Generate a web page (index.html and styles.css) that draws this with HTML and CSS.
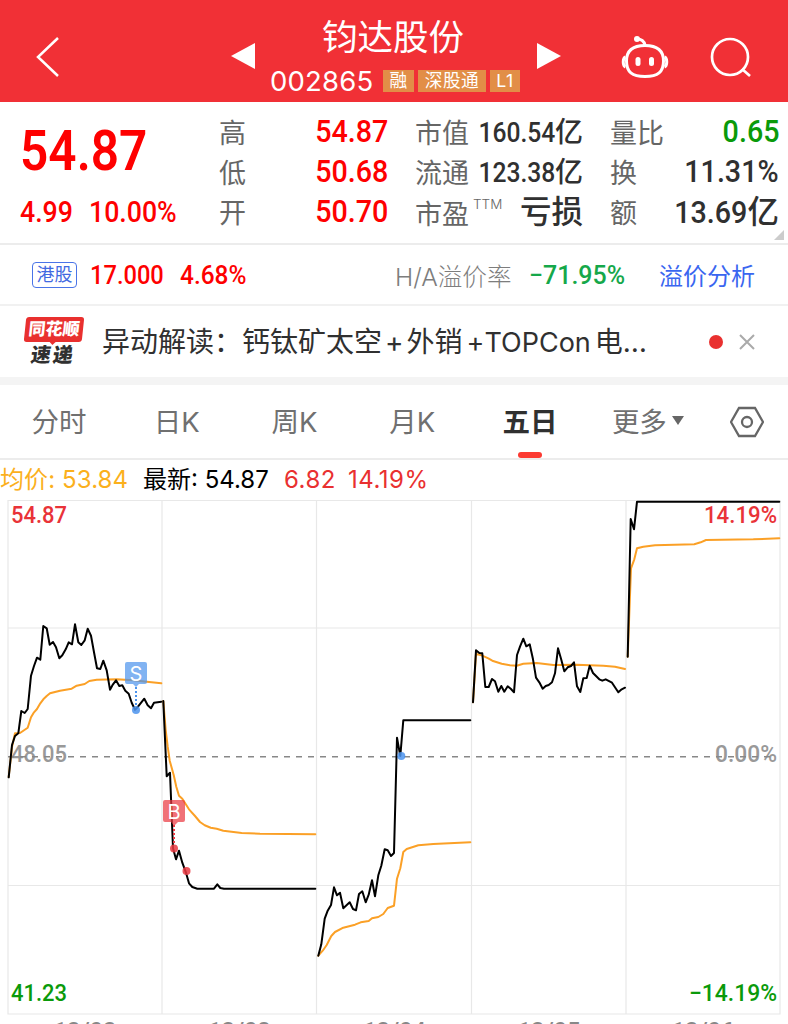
FILE: index.html
```html
<!DOCTYPE html>
<html lang="zh-CN">
<head>
  <meta charset="UTF-8" />
  <meta name="viewport" content="width=device-width, initial-scale=1.0"/>
  <title>钧达股份 002865</title>
  <link rel="stylesheet" href="styles.css">
</head>
<body>
  <header class="topbar">
    <svg class="back" width="24" height="42" viewBox="0 0 24 42"><path d="M22 2 L2 21 L22 40"/></svg>
    <svg class="arrow" width="24" height="26" viewBox="0 0 24 26"><path d="M0 13 L24 0 V26 Z"/></svg>
    <div class="stock">
      <h1>钧达股份</h1>
      <div class="code-row">
        <span class="code">002865</span>
        <span class="tag">融</span><span class="tag">深股通</span><span class="tag">L1</span>
      </div>
    </div>
    <svg class="arrow next" width="24" height="26" viewBox="0 0 24 26"><path d="M24 13 L0 0 V26 Z"/></svg>
    <svg class="robot" width="48" height="44" viewBox="0 0 48 44">
      <path class="line" d="M24 10.500 C37 10.500 42.500 16 42.500 26 C42.500 37 37 41.500 24 41.500 C11 41.500 5.500 37 5.500 26 C5.500 16 11 10.500 24 10.500 Z"/>
      <path class="line" d="M24 10 C23 6 21 4 16 4"/>
      <path class="line ear" d="M4.500 22 C1.500 23 1.500 31 4.500 32 M43.500 22 C46.500 23 46.500 31 43.500 32"/>
      <circle cx="16" cy="4" r="3"/>
      <rect x="14.500" y="22" width="5" height="9" rx="2.500"/>
      <rect x="28" y="22" width="5" height="9" rx="2.500"/>
    </svg>
    <svg class="search" width="42" height="42" viewBox="0 0 42 42"><circle cx="20" cy="20" r="18"/><path d="M32 32 L40 39"/></svg>
  </header>

  <section class="quote">
    <div class="price">
      <div class="last"><span class="num">54.87</span></div>
      <div class="change"><span class="num">4.99</span><span class="num">10.00%</span></div>
    </div>
    <div class="cell"><span>高</span><b class="num up">54.87</b></div>
    <div class="cell"><span>市值</span><b class="small"><i class="num">160.54</i>亿</b></div>
    <div class="cell"><span>量比</span><b class="num down">0.65</b></div>
    <div class="cell"><span>低</span><b class="num up">50.68</b></div>
    <div class="cell"><span>流通</span><b class="small"><i class="num">123.38</i>亿</b></div>
    <div class="cell"><span>换</span><b class="num">11.31%</b></div>
    <div class="cell"><span>开</span><b class="num up">50.70</b></div>
    <div class="cell"><span class="pe">市盈<sup>TTM</sup></span><b class="loss">亏损</b></div>
    <div class="cell"><span>额</span><b><i class="num">13.69</i>亿</b></div>
    <div class="corner"></div>
  </section>

  <section class="hk">
    <span class="hk-tag">港股</span>
    <span class="num hk-price">17.000</span>
    <span class="num hk-pct">4.68%</span>
    <span class="ratio-label">H/A溢价率</span>
    <span class="num ratio">−71.95%</span>
    <a class="analysis">溢价分析</a>
  </section>

  <section class="news">
    <div class="logo">
      <div class="logo-top">同花顺</div>
      <div class="logo-bottom">速递</div>
    </div>
    <p class="headline">异动解读：钙钛矿太空<span class="plus">+</span>外销<span class="topcon">+TOPCon</span>电<span class="dots">…</span></p>
    <span class="dot"></span>
    <svg class="close" width="16" height="16" viewBox="0 0 16 16"><path d="M1 1 L15 15 M15 1 L1 15"/></svg>
  </section>

  <nav class="tabs">
    <a>分时</a>
    <a>日K</a>
    <a>周K</a>
    <a>月K</a>
    <a class="active">五日</a>
    <a class="more">更多<i></i></a>
    <svg width="34" height="32" viewBox="0 0 34 32"><path d="M9 2 H25 L33 16 L25 30 H9 L1 16 Z"/><circle cx="17" cy="16" r="5"/></svg>
  </nav>

  <div class="legend">
    <span class="avg">均价: 53.84</span>
    <span class="now">最新: 54.87</span>
    <span class="rise">6.82</span>
    <span class="rise">14.19%</span>
  </div>

  <svg class="chart" width="788" height="525" viewBox="0 499 788 525">
    <!-- grid -->
    <path class="grid" d="M8 500.500 H780 V1014 H8 Z M162 500 V1014 M316.500 500 V1014 M471.500 500 V1014 M626 500 V1014 M8 628 H780 M8 885.500 H780"/>

    <!-- scale -->
    <g class="scale">
      <text class="s-red" x="11" y="523" textLength="56" lengthAdjust="spacingAndGlyphs">54.87</text>
      <text class="s-red" x="704" y="523" textLength="73" lengthAdjust="spacingAndGlyphs">14.19%</text>
      <text class="s-gray" x="11" y="762" textLength="56" lengthAdjust="spacingAndGlyphs">48.05</text>
      <text class="s-gray" x="715" y="762" textLength="62" lengthAdjust="spacingAndGlyphs">0.00%</text>
      <text class="s-green" x="11" y="1000.500" textLength="56" lengthAdjust="spacingAndGlyphs">41.23</text>
      <text class="s-green" x="689" y="1000.500" textLength="88" lengthAdjust="spacingAndGlyphs">−14.19%</text>
    </g>
    <path class="zero" d="M8 756.700 H776"/>

    <!-- average price -->
    <g class="avg-line">
      <polyline points="8.700,777 12,747 15,733.300 20,733 27.700,727.700 31,717.300 34,712.300 37,709 40.300,703.300 43.300,699.300 46.700,696 50,693.300 60,690.700 71.700,688.700 76.700,685.700 84.700,684 89.300,681 96.700,679.700 116.700,679.300 133.300,680.300 146.700,681.700 161.300,683.300"/>
      <polyline points="163.300,701 165.700,730 167.700,746.700 169.700,760.700 173.700,775 176.300,786.700 179,795.700 182.300,798.700 189,809.300 195,816 200,822 204.700,825.300 210.700,827.700 216.700,828.700 223.300,830.700 241.700,833 260,833.700 315.300,834.300"/>
      <polyline points="318.300,955.700 322.700,950.700 326.700,945 331.300,936 335,932 343.300,927.700 355,924.700 360.700,922.300 368.700,921 372,918.300 378.300,917 383.300,914 387.700,908 394,905.700 397,878.700 400.300,868.300 403.300,852 406.700,849 418.300,845.300 433.300,844 470.300,842.300"/>
      <polyline points="473,702.300 476,654 481.700,655.300 488.300,658.300 492.300,660.700 501.700,663.700 510,665.300 516.700,665.700 523.300,663.700 536.700,663 553.300,665 576.700,664.700 603.300,665.700 615,666.700 625,669"/>
      <polyline points="627.700,656.700 631,568.300 634.300,559.300 637,548.300 643.300,546.700 655,545.300 694.300,544.300 700.700,542.300 706,540 753.300,539.300 779.300,538.300"/>
    </g>

    <!-- price -->
    <g class="price-line">
      <polyline points="8.700,777.300 12,745 15,736 18.300,733.300 21.300,711 24.700,713 27.700,709 31,675.700 34,666 37,657.700 40.300,659.700 43.300,626 46.700,628.300 49.700,644.700 53,642 56,647.300 59.300,658.300 62.300,655.300 65.700,649.300 68.700,642.300 72,644.300 75,624.300 78.300,642.300 81.300,645 84.700,640.300 87.700,628.700 91,635.700 94,652.300 97,668.300 100.300,669 103.300,660.700 106.700,670.300 110,689.700 113,684.300 116,680.300 119.300,686 122.300,685.300 125.300,690.700 128.700,693.700 131.700,702.700 135,709.700 138,706.700 144.300,698.700 147.700,705.300 151,708.300 154,702.700 161.300,701.700"/>
      <polyline points="163.300,701 166.700,776.300 170,772.700 173,848.300 176,859.300 179,850.700 182.300,862.700 186,872.700 189,883.300 192.300,887 197.300,888.700 214,888.700 217.300,884.300 220.300,888 224,888.700 315.300,888.700"/>
      <polyline points="318.300,955.700 321.300,944.300 324.700,918.700 327.700,910.700 331,905 334,887.300 337,895.300 340,892.700 343.300,908.300 349.700,902.300 353,909 356,910.300 359,894 362.300,891.300 365.700,902.300 368.700,894.700 372,880.300 375,896.300 378.300,875.300 381.300,865.700 384.700,849.300 387.700,850.300 391,856 394,853 397,737.700 400.300,756 403.300,720.300 470.300,720.300"/>
      <polyline points="473,702.300 476,650.300 479.300,653 482.300,653.300 485.300,687 488.700,687 492,679 495,681.300 498.300,691.700 501.300,686 504.300,691.700 507.700,686.300 511,689 514,692.300 517,655 520,646.700 523.300,638.700 526.300,646.300 529.700,644.300 533,659.300 536,677.700 539.300,682.300 542.700,688.700 545.700,686 548.700,685 552,682.300 555,673.300 558,648.300 561.300,659.700 564.300,671.300 567.700,667.300 571,666 574,662.300 577,686.300 580.300,692 583.300,678.300 586.700,678 589.700,665.700 593,673 599.300,679.300 602.300,680.700 605.700,679.300 612,682.700 618.300,692.300 621.700,689.300 625,687.700"/>
      <polyline points="627.700,656.700 630.700,519 634,529.300 637,501.700 779.300,501.700"/>
    </g>

    <!-- trades -->
    <g class="sell">
      <path d="M127 662 H145 Q147 662 147 664 V682 Q147 684 145 684 H139 L136 687 L133 684 H127 Q125 684 125 682 V664 Q125 662 127 662 Z"/>
      <path class="stem" d="M136 687 V706"/>
      <circle cx="136" cy="710" r="4"/>
      <circle cx="401.300" cy="756" r="4"/>
      <text x="136" y="681">S</text>
    </g>
    <g class="buy">
      <path d="M165 800 H183 Q185 800 185 802 V820 Q185 822 183 822 H178 L174 826 L171 822 H165 Q163 822 163 820 V802 Q163 800 165 800 Z"/>
      <path class="stem" d="M174 825 V844"/>
      <circle cx="174" cy="848.500" r="4"/>
      <circle cx="186.500" cy="871" r="4"/>
      <text x="174" y="818.500">B</text>
    </g>

    <g class="dates">
      <text x="85" y="1039">12/02</text>
      <text x="239.500" y="1039">12/03</text>
      <text x="394.500" y="1039">12/04</text>
      <text x="549" y="1039">12/05</text>
      <text x="703" y="1039">12/06</text>
    </g>
  </svg>
</body>
</html>
```
FILE: styles.css
```css
* {
  box-sizing: border-box;
}
body {
  margin: 0;
  width: 788px;
  height: 1024px;
  overflow: hidden;
  background: #fff;
  color: #303030;
  font-family: Inter, "Noto Sans CJK SC", sans-serif;
}
svg {
  display: block;
  flex: none;
}
i {
  font-style: normal;
}
.num {
  display: inline-block;
  font-family: Roboto, sans-serif;
  font-weight: 500;
  transform: scaleX(0.91);
  transform-origin: right center;
  white-space: nowrap;
}
.up {
  color: #fe0000;
}
.down {
  color: #0a9a0a;
}

/* top bar */
.topbar {
  display: flex;
  height: 102px;
  background: #f13036;
  color: #fff;
}
.back {
  margin: 36px 0 0 36px;
  fill: none;
  stroke: #fff;
  stroke-width: 2.5;
}
.arrow {
  margin: 43px 0 0 171px;
  fill: #fff;
}
.stock {
  width: 267px;
  margin-left: 15px;
}
.stock h1 {
  margin: 17px 0 0;
  padding-left: 52px;
  font-size: 35.5px;
  line-height: 42px;
  font-weight: 400;
}
.code-row {
  display: flex;
  align-items: center;
  height: 44px;
}
.code {
  width: 113px;
  font-size: 27.5px;
  letter-spacing: 0.2px;
}
.tag {
  height: 22px;
  line-height: 22px;
  margin-right: 4px;
  padding: 0 6.5px;
  background: #e28e47;
  font-size: 17.7px;
  letter-spacing: 0.5px;
}
.arrow.next {
  margin-left: 0;
}
.robot {
  margin: 35px 0 0 60px;
  fill: #fff;
}
.robot .line {
  fill: none;
  stroke: #fff;
  stroke-width: 3;
}
.search {
  margin: 37px 0 0 41px;
  fill: none;
  stroke: #fff;
  stroke-width: 2.7;
}

/* quote */
.quote {
  position: relative;
  display: grid;
  grid-template-columns: 169px 168px 169px;
  grid-template-rows: repeat(3, 40px);
  column-gap: 27px;
  height: 143px;
  padding: 10px 9px 0 219px;
  border-bottom: 2px solid #ececec;
}
.price {
  position: absolute;
  left: 20px;
  top: 16px;
  color: #fe0000;
}
.price .num {
  transform-origin: left center;
}
.last {
  height: 64px;
  line-height: 64px;
  font-size: 56px;
}
.last .num {
  font-weight: 600;
  transform: scaleX(0.885);
}
.change {
  display: flex;
  height: 60px;
  line-height: 60px;
  font-size: 30px;
}
.change .num {
  width: 69px;
  transform: scaleX(0.89);
}
.cell {
  display: flex;
  justify-content: space-between;
  align-items: center;
  line-height: 40px;
  font-size: 27px;
  color: #666;
  white-space: nowrap;
}
.cell span {
  padding-top: 4px;
  line-height: 36px;
}
.cell b {
  font-size: 31.5px;
  font-weight: 500;
  color: #303030;
}
.cell b.up {
  color: #fe0000;
}
.cell b.down {
  color: #0a9a0a;
}
.cell b.small {
  margin-left: -20px;
  font-size: 28px;
}
.cell .small .num {
  transform: scaleX(0.88);
}
.cell .pe {
  padding-top: 6px;
  line-height: 34px;
}
.pe sup {
  font-size: 13.5px;
  font-weight: 300;
  line-height: 1;
  vertical-align: 15px;
  margin-left: 4px;
}
.loss {
  margin-left: -20px;
}
.corner {
  position: absolute;
  right: 4px;
  bottom: 3px;
  border-left: 10px solid transparent;
  border-bottom: 10px solid #ccc;
}

/* hk */
.hk {
  display: flex;
  align-items: center;
  height: 61px;
  padding: 0 32px;
  border-bottom: 2px solid #f1f1f1;
  font-size: 24px;
  white-space: nowrap;
}
.hk .num {
  font-size: 26px;
  color: #fe0000;
  transform-origin: left center;
}
.hk-tag {
  width: 45px;
  height: 26px;
  line-height: 24px;
  border: 1px solid #4a74e8;
  border-radius: 4px;
  color: #4169e1;
  font-size: 18px;
  text-align: center;
}
.hk-price {
  width: 90px;
  margin-left: 13px;
}
.hk .hk-pct {
  width: 215px;
  transform: scaleX(0.94);
}
.ratio-label {
  width: 134px;
  color: #7d7d7d;
  font-weight: 300;
  font-size: 24.6px;
}
.hk .ratio {
  width: 130px;
  color: #15a84a;
  transform: scaleX(0.96);
}
.analysis {
  color: #3a66f0;
}

/* news */
.news {
  display: flex;
  align-items: center;
  height: 71px;
}
.logo {
  position: relative;
  width: 60px;
  margin-left: 25px;
  font-weight: 900;
  font-size: 17px;
  text-align: center;
}
.logo-top {
  width: 58px;
  height: 25px;
  line-height: 24px;
  border-radius: 3px;
  background: #e9302f;
  color: #fff;
  transform: skewX(-6deg);
}
.logo-top::after {
  content: "";
  position: absolute;
  left: 25px;
  top: 24px;
  border: 4px solid transparent;
  border-top-color: #e9302f;
  border-bottom: 0;
}
.logo-bottom {
  height: 24px;
  line-height: 26px;
  font-size: 20px;
  letter-spacing: 2px;
  padding-right: 4px;
  transform: skewX(-8deg);
}
.headline {
  width: 608px;
  margin: -4px 0 0 17px;
  font-size: 28px;
  white-space: nowrap;
}
.plus {
  margin: 0 3px;
}
.topcon {
  margin: 0 4px;
  font-size: 27px;
}
.dot {
  width: 14px;
  height: 14px;
  margin-left: -1px;
  border-radius: 50%;
  background: #e9302f;
}
.close {
  margin-left: 16px;
  fill: none;
  stroke: #aaa;
  stroke-width: 2;
}

/* tabs */
.tabs {
  display: grid;
  grid-template-columns: repeat(6, 117.8px) 80px;
  align-items: center;
  justify-items: center;
  height: 83px;
  border-top: 8px solid #f4f4f4;
  border-bottom: 2px solid #ececec;
  font-size: 27.5px;
  color: #707070;
}
.tabs a {
  display: flex;
  align-items: center;
  height: 73px;
  padding-bottom: 3px;
}
.tabs .active {
  position: relative;
  color: #303030;
  font-weight: 700;
}
.active::after {
  content: "";
  position: absolute;
  left: 50%;
  bottom: 0;
  width: 24px;
  height: 6px;
  margin-left: -12px;
  border-radius: 3px;
  background: #fc3a32;
}
.more i {
  margin-left: 5px;
  border: 6px solid transparent;
  border-top: 9px solid #666;
  border-bottom: 0;
}
.tabs svg {
  fill: none;
  stroke: #666;
  stroke-width: 2.3;
}

/* chart */
.legend {
  display: flex;
  height: 39px;
  line-height: 39px;
  font-size: 24px;
  white-space: nowrap;
}
.avg {
  width: 143px;
  color: #fbb01c;
  letter-spacing: 0.1px;
}
.now {
  width: 141px;
  color: #000;
}
.rise {
  width: 64px;
  color: #e93030;
  letter-spacing: 0.5px;
}
.grid {
  fill: none;
  stroke: #e8e8e8;
  stroke-width: 1.2;
}
.zero {
  stroke: #888;
  stroke-width: 1.4;
  stroke-dasharray: 6 6;
}
.scale text {
  font: 500 24px Roboto, sans-serif;
}
.s-red {
  fill: #e93338;
}
.s-gray {
  fill: #999;
}
.s-green {
  fill: #0a9a0a;
}
.avg-line,
.price-line {
  fill: none;
  stroke-width: 2;
  stroke-linejoin: round;
  stroke-linecap: round;
}
.avg-line {
  stroke: #fba026;
}
.price-line {
  stroke: #000;
}
.sell path {
  fill: #4b93ed;
  fill-opacity: 0.7;
}
.sell circle {
  fill: #4b93ed;
  fill-opacity: 0.85;
}
.buy path {
  fill: #ea3a42;
  fill-opacity: 0.72;
}
.buy circle {
  fill: #ea3a42;
  fill-opacity: 0.85;
}
.stem {
  stroke-width: 2;
  stroke-dasharray: 2 2;
}
.sell .stem {
  stroke: #4b93ed;
}
.buy .stem {
  stroke: #ea3a42;
}
.sell text,
.buy text {
  fill: #fff;
  font-size: 20px;
  text-anchor: middle;
}
.dates text {
  fill: #888;
  font: 500 23.5px Roboto, sans-serif;
  text-anchor: middle;
}
```
